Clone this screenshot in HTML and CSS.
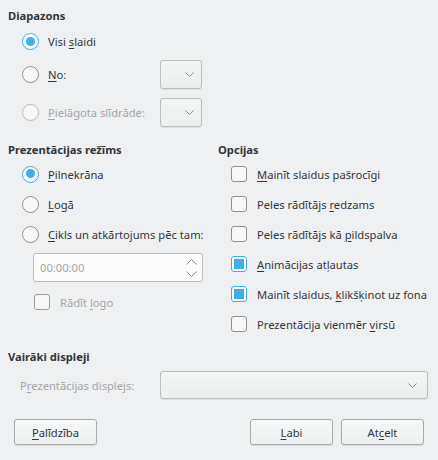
FILE: index.html
```html
<!DOCTYPE html>
<html lang="lv">
<head>
<meta charset="utf-8">
<title>Prezentācija</title>
<link rel="stylesheet" href="styles.css">
</head>
<body>
<div class="dialog">
  <section class="range-group">
    <h2 class="title">Diapazons</h2>
    <div class="range">
      <div class="opt"><span class="radio on"></span><span>Visi <u>s</u>laidi</span></div>
      <div class="cell"></div>
      <div class="opt"><span class="radio"></span><span><u>N</u>o:</span></div>
      <div class="combo small"><svg class="chev" width="9" height="5" viewBox="0 0 9 5"><polyline points="0.5,0.5 4.5,4.5 8.5,0.5"/></svg></div>
      <div class="opt dis"><span class="radio"></span><span><u>P</u>ielāgota slīdrāde:</span></div>
      <div class="combo small"><svg class="chev" width="9" height="5" viewBox="0 0 9 5"><polyline points="0.5,0.5 4.5,4.5 8.5,0.5"/></svg></div>
    </div>
  </section>

  <div class="mid">
    <section class="col">
      <h2 class="title">Prezentācijas režīms</h2>
      <div class="rows">
        <div class="opt row"><span class="radio on"></span><span><u>P</u>ilnekrāna</span></div>
        <div class="opt row"><span class="radio"></span><span><u>L</u>ogā</span></div>
        <div class="opt row"><span class="radio"></span><span><u>C</u>ikls un atkārtojums pēc tam:</span></div>
      </div>
      <div class="spin">
        <span class="spin-text">00:00:00</span>
        <svg class="spin-arrows" width="11" height="18" viewBox="0 0 11 18"><polyline points="0.5,5.5 5.5,0.5 10.5,5.5"/><polyline points="0.5,12.5 5.5,17.5 10.5,12.5"/></svg>
      </div>
      <div class="opt logo dis"><span class="check dim"></span><span>Rādīt <u>l</u>ogo</span></div>
    </section>

    <section class="col">
      <h2 class="title">Opcijas</h2>
      <div class="rows right">
        <div class="opt row"><span class="check"></span><span><u>M</u>ainīt slaidus pašrocīgi</span></div>
        <div class="opt row"><span class="check"></span><span>Peles rādītājs <u>r</u>edzams</span></div>
        <div class="opt row"><span class="check"></span><span>Peles rādītājs kā <u>p</u>ildspalva</span></div>
        <div class="opt row"><span class="check on"></span><span><u>A</u>nimācijas atļautas</span></div>
        <div class="opt row"><span class="check on"></span><span>Mainīt slaidus, <u>k</u>likšķinot uz fona</span></div>
        <div class="opt row"><span class="check"></span><span>Prezentācija vienmēr <u>v</u>irsū</span></div>
      </div>
    </section>
  </div>

  <section class="displays">
    <h2 class="title">Vairāki displeji</h2>
    <div class="disp-row">
      <span class="disp-label dis">P<u>r</u>ezentācijas displejs:</span>
      <div class="combo wide"><svg class="chev" width="9" height="5" viewBox="0 0 9 5"><polyline points="0.5,0.5 4.5,4.5 8.5,0.5"/></svg></div>
    </div>
  </section>

  <div class="buttons">
    <button class="btn"><u>P</u>alīdzība</button>
    <span class="spacer"></span>
    <button class="btn"><u>L</u>abi</button>
    <button class="btn">At<u>c</u>elt</button>
  </div>
</div>
</body>
</html>
```

FILE: styles.css
```css
html, body {
  margin: 0;
  padding: 0;
  background: #eff0f1;
}
body {
  width: 438px;
  height: 460px;
  overflow: hidden;
  font-family: "Noto Sans", "DejaVu Sans", sans-serif;
  font-size: 11.2px;
  color: #31363b;
}
u {
  text-decoration: underline;
  text-decoration-thickness: 1px;
  text-underline-offset: 2px;
}
.dialog {
  padding: 8px 10px 0 8px;
}
.title {
  margin: 0;
  font-size: 11.2px;
  font-weight: bold;
  line-height: 16px;
  height: 16px;
}
.range {
  margin: 8px 0 0 14px;
  width: 180px;
  display: grid;
  grid-template-columns: 1fr 42px;
  grid-template-rows: 19px 29px 29px;
  row-gap: 9px;
}
.opt {
  display: flex;
  align-items: center;
  white-space: nowrap;
}
.dis {
  color: #a3a5a7;
}
.radio {
  width: 17px;
  height: 17px;
  box-sizing: border-box;
  border: 1px solid #8d9093;
  border-radius: 50%;
  background: #f8f8f8;
  margin-right: 9px;
  flex: none;
  position: relative;
}
.dis .radio {
  border-color: #b9bbbd;
}
.radio.on {
  border: 1.5px solid #3daee9;
  background: #fcfcfc;
}
.radio.on::after {
  content: "";
  position: absolute;
  left: 2.5px;
  top: 2.5px;
  width: 9px;
  height: 9px;
  border-radius: 50%;
  background: #3daee9;
}
.check {
  width: 16px;
  height: 16px;
  box-sizing: border-box;
  border: 1px solid #8d9093;
  border-radius: 3px;
  background: #f8f8f8;
  margin-right: 10px;
  flex: none;
  position: relative;
}
.check.dim {
  border-color: #9a9c9f;
}
.check.on {
  border: 1.5px solid #3daee9;
  background: #fcfcfc;
}
.check.on::after {
  content: "";
  position: absolute;
  left: 1.5px;
  top: 1.5px;
  width: 10px;
  height: 10px;
  background: #3daee9;
}
.combo {
  box-sizing: border-box;
  border: 1px solid #bcbebf;
  border-radius: 3px;
  background: linear-gradient(#f4f5f5, #eceded);
  box-shadow: 0 1px 1px rgba(0,0,0,0.08);
  display: flex;
  align-items: center;
  justify-content: flex-end;
}
.combo.small {
  width: 42px;
  height: 29px;
  padding-right: 7px;
}
.chev polyline, .spin-arrows polyline {
  fill: none;
  stroke: #8c8f92;
  stroke-width: 1;
}
.mid {
  margin-top: 15px;
  display: grid;
  grid-template-columns: 210px 1fr;
}
.rows {
  margin-top: 1px;
  padding-left: 14px;
}
.rows.right {
  padding-left: 13px;
}
.row {
  height: 30px;
}
.spin {
  margin: 4px 0 0 25px;
  width: 170px;
  height: 29px;
  box-sizing: border-box;
  border: 1px solid #bcbebf;
  border-radius: 3px;
  background: #fcfcfc;
  display: flex;
  align-items: center;
  justify-content: space-between;
  padding: 0 5px 0 6px;
}
.spin-text {
  color: #a3a5a7;
}
.logo {
  margin: 12px 0 0 26px;
  height: 16px;
}
.displays {
  margin-top: 10px;
}
.disp-row {
  margin-top: 6px;
  display: flex;
  align-items: center;
  height: 28px;
  padding-left: 12px;
}
.disp-label {
  width: 140px;
  white-space: nowrap;
}
.combo.wide {
  width: 268px;
  height: 28px;
  padding-right: 10px;
}
.buttons {
  margin-top: 20px;
  display: flex;
  gap: 8px;
  padding: 0 4px 0 6px;
}
.spacer {
  flex: 1;
}
.btn {
  width: 83px;
  height: 26px;
  box-sizing: border-box;
  border: 1px solid #a9abad;
  border-radius: 3px;
  background: linear-gradient(#f6f7f7, #eeeff0);
  box-shadow: 0 1px 1px rgba(0,0,0,0.1);
  font-family: inherit;
  font-size: 11.2px;
  color: #31363b;
  padding: 0;
}
```
